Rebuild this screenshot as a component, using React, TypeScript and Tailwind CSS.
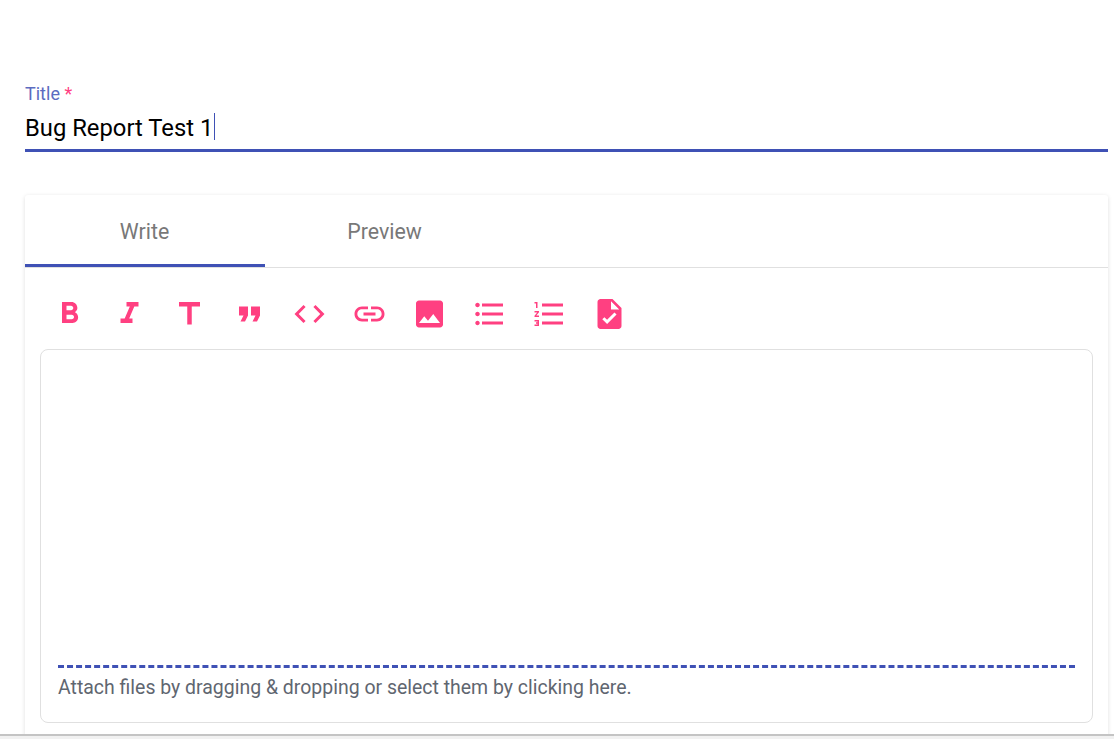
import React from 'react';
import {
  MdCode,
  MdFormatBold,
  MdFormatItalic,
  MdFormatListBulleted,
  MdFormatListNumbered,
  MdFormatQuote,
  MdImage,
  MdLink,
  MdTitle,
} from 'react-icons/md';

function FileCheckIcon({ className }: { className?: string }) {
  return (
    <svg viewBox="0 0 24 24" className={className} fill="currentColor">
      <path d="M14 2H6c-1.1 0-2 .9-2 2v16c0 1.1.9 2 2 2h12c1.1 0 2-.9 2-2V8l-6-6zm-1 7V3.5L18.5 9H13zm-2.6 9.7-3.2-3.2 1.4-1.4 1.8 1.8 4.9-4.9 1.4 1.4-6.3 6.3z" />
    </svg>
  );
}

const tools = [
  MdFormatBold,
  MdFormatItalic,
  MdTitle,
  MdFormatQuote,
  MdCode,
  MdLink,
  MdImage,
  MdFormatListBulleted,
  MdFormatListNumbered,
  FileCheckIcon,
];

export default function App() {
  return (
    <div className="h-[739px] overflow-hidden bg-white font-['Roboto',sans-serif] flex flex-col">
      <div className="flex-1 min-h-0 pl-[25px] pr-[6px] pt-[84px]">
        {/* Title field */}
        <label className="block text-[18px] leading-[19px] text-[#5c6bc0]">
          Title <span className="text-[#ff4081]">*</span>
        </label>
        <div className="h-[49px] border-b-[3px] border-[#3f51b5] pt-[4px] text-[23.8px] leading-[42px] text-black flex items-start">
          <span>Bug Report Test 1</span>
          <span className="ml-[1px] mt-[6px] h-[27px] w-px bg-[#3f51b5]" />
        </div>

        {/* Editor card */}
        <div className="mt-[43px] rounded-t-[3px] bg-white shadow-[0_1px_4px_rgba(0,0,0,0.13)] h-[600px]">
          <div className="flex h-[73px] border-b border-[#e0e0e0]">
            <div className="w-[240px] h-[72px] border-b-[3px] border-[#3f51b5] pr-px text-center text-[21.33px] leading-[74px] text-[#787878]">
              Write
            </div>
            <div className="w-[240px] pr-px text-center text-[21.33px] leading-[74px] text-[#787878]">
              Preview
            </div>
          </div>
          <div className="flex pl-[15px] pt-[16px] h-[81px] text-[#ff4081]">
            {tools.map((Icon, i) => (
              <div key={i} className="w-[60px] h-[60px] flex items-center justify-center">
                <Icon className="w-[36px] h-[36px] -translate-x-[0.5px]" />
              </div>
            ))}
          </div>
          <div className="mx-[15px] h-[374px] rounded-[8px] border border-[#e0e0e0] flex flex-col justify-end px-[17px] pb-[23px]">
            <div className="border-t-[3px] border-dashed border-[#3f51b5] pt-[8px] text-[19.47px] leading-[23px] text-[#5f6670]">
              Attach files by dragging &amp; dropping or select them by clicking here.
            </div>
          </div>
        </div>
      </div>
      {/* Bottom window edge */}
      <div className="h-[5px] shrink-0 border-t-2 border-[#c4c4c4] bg-[#f1f1f1]" />
    </div>
  );
}
